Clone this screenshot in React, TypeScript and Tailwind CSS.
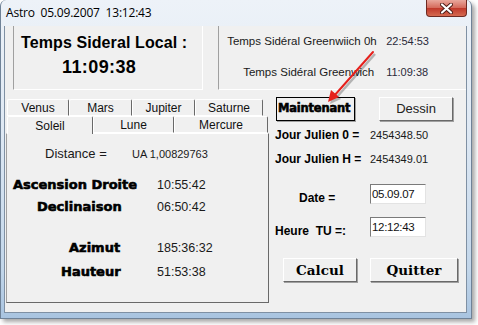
import React from "react";

const heavy = "font-['DejaVu_Sans'] font-bold [-webkit-text-stroke:0.6px_#000] text-black";

const row1 = [
  { label: "Venus", w: "w-[62px]" },
  { label: "Mars", w: "w-[63px]" },
  { label: "Jupiter", w: "w-[63px]" },
  { label: "Saturne", w: "w-[68px]" },
];

const row2 = [
  { label: "Soleil", w: "w-[86px]", active: true },
  { label: "Lune", w: "w-[81px]" },
  { label: "Mercure", w: "w-[94px]" },
];

function Tab({ label, w, active }: { label: string; w: string; active?: boolean }) {
  return (
    <div
      className={`${w} flex items-center justify-center text-[12px] text-[#111] border-t border-l border-t-white border-l-white border-r border-r-[#696969] rounded-t-[2px] ${
        active ? "h-[18px] bg-[#f0f0f0] -mb-px relative z-10" : "h-[17px] border-b border-b-white"
      }`}
    >
      {label}
    </div>
  );
}

function Btn({ w, className, children }: { w: string; className?: string; children: React.ReactNode }) {
  return (
    <div
      className={`${w} h-[24px] flex items-center justify-center bg-[#f0f0f0] border border-t-white border-l-white border-r-[#696969] border-b-[#696969] shadow-[1px_1px_0_#a0a0a0] overflow-hidden whitespace-nowrap ${className ?? ""}`}
    >
      {children}
    </div>
  );
}

function Field({ value }: { value: string }) {
  return (
    <div className="w-[56px] h-[20px] bg-white border border-t-[#7a7a7a] border-l-[#7a7a7a] border-r-[#e3e3e3] border-b-[#e3e3e3] pl-[1px] text-[11.5px] leading-[18px] tracking-[-0.3px] text-[#111]">
      {value}
    </div>
  );
}

export default function App() {
  return (
    <div className="relative w-[478px] h-[325px] bg-white overflow-hidden font-['Liberation_Sans'] text-[#1a1a1a]">
      <div className="w-[472px] h-[319px] flex flex-col rounded-t-[6px] border-x border-b border-[#6f8297] bg-[linear-gradient(180deg,#edf2f8_0%,#dfe9f4_40%,#c2d6ea_85%,#a9c4e0_100%)] shadow-[3px_3px_4px_rgba(0,0,0,0.35)]">
        {/* title bar */}
        <div className="h-[26px] flex justify-between">
          <div className="ml-[5px] mt-[5px] text-[12px] leading-[16px] text-black font-['Open_Sans'] tracking-[-0.2px]">
            Astro&nbsp;&nbsp;05.09.2007&nbsp;&nbsp;13:12:43
          </div>
          <div className="mr-[4px] w-[41px] h-[17px] rounded-b-[4px] border border-t-0 border-[#6e2a22] bg-[linear-gradient(180deg,#e9a89d_0%,#d56b5c_48%,#c0392b_52%,#d56a50_100%)] flex items-center justify-center">
            <svg width="13" height="11" viewBox="0 0 13 11">
              <path d="M2 1.5 L11 9.5 M11 1.5 L2 9.5" stroke="#4a1a14" strokeWidth="4" strokeLinecap="round" />
              <path d="M2 1.5 L11 9.5 M11 1.5 L2 9.5" stroke="#ffffff" strokeWidth="2.2" strokeLinecap="round" />
            </svg>
          </div>
        </div>

        {/* client */}
        <div className="ml-[3px] mr-[4px] mb-[5px] flex-1 bg-[#f0f0f0] border border-[#7f90a3] border-t-0 flex flex-col">
          {/* top panels */}
          <div className="flex h-[64px] ml-[8px]">
            <div className="w-[191px] border-l border-b border-r border-l-[#a0a0a0] border-b-white border-r-white flex flex-col">
              <div className="pt-[7px] ml-[7px] text-[16px] leading-[20px] font-bold text-black tracking-[0.1px]">Temps Sideral Local :</div>
              <div className="mt-[3px] ml-[48px] text-[18px] leading-[22px] font-bold text-black tracking-[0.4px]">11:09:38</div>
            </div>
            <div className="ml-[15px] w-[249px] border-l border-b border-l-[#a0a0a0] border-b-white flex flex-col text-[11.5px] leading-[14px]">
              <div className="flex mt-[8px] ml-[8px]">
                <span className="w-[159px]">Temps Sidéral Greenwiich 0h</span>
                <span className="text-[11px] text-[#2a2a3a]">22:54:53</span>
              </div>
              <div className="flex mt-[17px] ml-[24px]">
                <span className="w-[143px]">Temps Sidéral Greenwich</span>
                <span className="text-[11px] text-[#2a2a3a]">11:09:38</span>
              </div>
            </div>
          </div>

          {/* main */}
          <div className="flex mt-[7px]">
            {/* tab control */}
            <div className="ml-[1px] mt-[2px] w-[263px] flex flex-col">
              <div className="flex ml-[1px]">
                {row1.map((t) => (
                  <Tab key={t.label} label={t.label} w={t.w} />
                ))}
              </div>
              <div className="flex ml-[1px] items-end">
                {row2.map((t) => (
                  <Tab key={t.label} label={t.label} w={t.w} active={t.active} />
                ))}
              </div>
              <div className="h-[170px] border border-t-white border-l-[#a0a0a0] border-r-[#696969] border-b-[#696969] flex flex-col">
                <div className="flex items-center h-[20px] mt-[10px] ml-[38px]">
                  <span className="w-[87px] text-[13px]">Distance =</span>
                  <span className="text-[11px]">UA 1,00829763</span>
                </div>
                <div className="flex items-center h-[20px] mt-[11px] ml-[6px]">
                  <span className={`w-[144px] text-[13px] ${heavy}`}>Ascension Droite</span>
                  <span className="text-[12.5px]">10:55:42</span>
                </div>
                <div className="flex items-center h-[20px] mt-[2px] ml-[30px]">
                  <span className={`w-[120px] text-[13px] ${heavy}`}>Declinaison</span>
                  <span className="text-[12.5px]">06:50:42</span>
                </div>
                <div className="flex items-center h-[20px] mt-[21px] ml-[62px]">
                  <span className={`w-[88px] text-[13px] ${heavy}`}>Azimut</span>
                  <span className="text-[12.5px]">185:36:32</span>
                </div>
                <div className="flex items-center h-[20px] mt-[4px] ml-[54px]">
                  <span className={`w-[96px] text-[13px] ${heavy}`}>Hauteur</span>
                  <span className="text-[12.5px]">51:53:38</span>
                </div>
              </div>
            </div>

            {/* right column */}
            <div className="ml-[6px] flex flex-col">
              <div className="flex">
                <Btn w="w-[79px]" className="ml-[1px] !border-black justify-start pl-[1px]">
                  <span className={`text-[11.5px] tracking-[-0.2px] ${heavy}`}>Maintenant</span>
                </Btn>
                <Btn w="w-[74px]" className="ml-[24px]">
                  <span className="text-[13px] text-[#222]">Dessin</span>
                </Btn>
              </div>
              <div className="flex items-center h-[16px] mt-[6px]">
                <span className="w-[95px] text-[12px] font-bold text-black">Jour Julien 0 =</span>
                <span className="text-[11px]">2454348.50</span>
              </div>
              <div className="flex items-center h-[16px] mt-[8px]">
                <span className="w-[95px] text-[12px] font-bold text-black">Jour Julien H =</span>
                <span className="text-[11px]">2454349.01</span>
              </div>
              <div className="flex items-start mt-[17px]">
                <span className="w-[95px] pl-[24px] mt-[7px] text-[12px] leading-[14px] font-bold text-black">Date =</span>
                <Field value="05.09.07" />
              </div>
              <div className="flex items-start mt-[12px]">
                <span className="w-[95px] mt-[7px] text-[12px] leading-[14px] font-bold text-black whitespace-pre">Heure  TU =:</span>
                <Field value="12:12:43" />
              </div>
              <div className="flex mt-[20px]">
                <Btn w="w-[74px]" className="ml-[8px]">
                  <span className="font-['DejaVu_Serif'] font-bold text-[13.5px] text-black">Calcul</span>
                </Btn>
                <Btn w="w-[88px]" className="ml-[13px]">
                  <span className="font-['DejaVu_Serif'] font-bold text-[13.5px] text-black">Quitter</span>
                </Btn>
              </div>
            </div>
          </div>
        </div>
      </div>

      {/* annotation arrow */}
      <svg className="absolute left-0 top-0 pointer-events-none" width="478" height="325">
        <g transform="translate(2,2)" opacity="0.25">
          <path d="M373 52 L334 96" stroke="#000" strokeWidth="2.5" />
          <path d="M328 102 L331 90 L339 97 Z" fill="#000" />
        </g>
        <path d="M373 52 L334 96" stroke="#e5201c" strokeWidth="2" strokeLinecap="round" />
        <path d="M328 102 L331 90 L339 97 Z" fill="#e5201c" />
      </svg>
    </div>
  );
}
